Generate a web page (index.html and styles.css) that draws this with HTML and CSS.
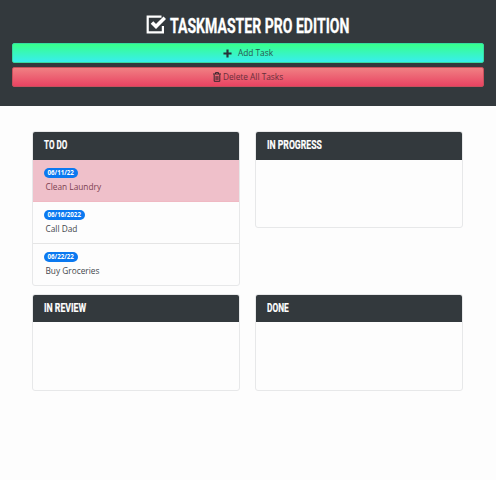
FILE: index.html
```html
<!DOCTYPE html>
<html lang="en">
<head>
<meta charset="utf-8">
<title>Taskmaster Pro Edition</title>
<link rel="stylesheet" href="styles.css">
</head>
<body>
<header class="hero">
  <h1 class="brand">
    <svg class="brand-icon" viewBox="0 0 20 20"><path d="M15.5 1.7H1.7v15.6h15.2V11" fill="none" stroke="#fff" stroke-width="2.2"/><path d="M6 7.5l4 4L18.8 2.7" fill="none" stroke="#fff" stroke-width="3.6"/></svg>
    <span class="brand-text">TASKMASTER PRO EDITION</span>
  </h1>
  <button class="btn btn-add"><svg class="plus" viewBox="0 0 10 10"><path d="M5 .5v9M.5 5h9" stroke="#263238" stroke-width="2.4"/></svg><span>Add Task</span></button>
  <button class="btn btn-delete"><svg class="trash" viewBox="0 0 8 10"><path d="M0 2h8M2.5 2V.6h3V2M1.2 2.5v6.8h5.6V2.5M3.1 4v4M4.9 4v4" fill="none" stroke="#36272d" stroke-width="1"/></svg><span>Delete All Tasks</span></button>
</header>
<main class="board">
  <section class="card">
    <h2 class="card-header"><span class="label">TO DO</span></h2>
    <ul class="list">
      <li class="item overdue"><span class="badge">06/11/22</span><p>Clean Laundry</p></li>
      <li class="item"><span class="badge">06/16/2022</span><p>Call Dad</p></li>
      <li class="item"><span class="badge">06/22/22</span><p>Buy Groceries</p></li>
    </ul>
  </section>
  <section class="card">
    <h2 class="card-header"><span class="label label-progress">IN PROGRESS</span></h2>
    <ul class="list"></ul>
  </section>
  <section class="card card-short">
    <h2 class="card-header"><span class="label label-review">IN REVIEW</span></h2>
    <ul class="list"></ul>
  </section>
  <section class="card card-short">
    <h2 class="card-header"><span class="label label-done">DONE</span></h2>
    <ul class="list"></ul>
  </section>
</main>
</body>
</html>
```
FILE: styles.css
```css
* { box-sizing: border-box; }
body { margin: 0; background: #fdfdfd; color: #43474b; font: 8.3px/12px "Open Sans", "Noto Sans", sans-serif; }
h1, h2, p, ul { margin: 0; padding: 0; }
ul { list-style: none; }
.hero { height: 106px; padding: 12px 12px 0; background: #33393d; }
.brand { display: flex; align-items: center; width: 204px; height: 26px; margin: 0 auto 5px; color: #fff; font: 700 20.5px/26px Roboto, sans-serif; white-space: nowrap; }
.brand-icon { flex: none; width: 20px; height: 20px; margin-right: 4px; }
.brand-text { transform: scaleX(.686); transform-origin: left center; padding-top: 2px; -webkit-text-stroke: .3px #fff; }
.btn { display: flex; align-items: center; justify-content: center; width: 100%; height: 20px; margin: 0 0 4px; padding: 0; border: 1px solid; border-radius: 2px; font: inherit; }
.btn-add { border-color: #36dba2; background: linear-gradient(#38ff8b, #38eeee); color: #28534f; }
.btn-delete { border-color: #c84f5c; background: linear-gradient(#f08083, #e94362); color: #69303a; }
.plus { width: 9px; height: 9px; margin-right: 6px; }
.trash { width: 8px; height: 10px; margin-right: 2px; }
.board { display: grid; grid-template-columns: 208px 208px; column-gap: 15px; row-gap: 8px; align-items: start; padding: 25px 32px 0; }
.card { overflow: hidden; border: 1px solid #e7e8e9; border-radius: 3px; background: #fdfdfd; }
.card-header { height: 29px; padding-left: 11.5px; margin: -1px -1px 0; border-left: 1px solid #b8babc; padding-left: 10.5px; background: #33393d; color: #fff; font: 700 13px/28px Roboto, sans-serif; }
.card-short .card-header { height: 28px; }
.label { display: inline-block; transform: scaleX(.62); transform-origin: left center; white-space: nowrap; -webkit-text-stroke: .2px #fff; }
.label-progress { transform: scaleX(.665); }
.label-review { transform: scaleX(.67); }
.label-done { transform: scaleX(.64); }
.list { min-height: 67px; }
.item { height: 42px; padding: 8px 10.5px 0; border-bottom: 1px solid #e5e5e5; }
.item:last-child { height: 41px; border-bottom: 0; }
.card-short .list { min-height: 68px; }
.overdue { border-bottom-color: #f0b9c3; background: #efc0ca; color: #7d4050; }
.badge { display: block; width: max-content; height: 10px; padding: 0 4px; border-radius: 5px; background: #0b79f0; color: #fff; font-size: 6.2px; font-weight: 700; line-height: 10px; }
.item p { margin: 3px 0 0 2px; }
```
